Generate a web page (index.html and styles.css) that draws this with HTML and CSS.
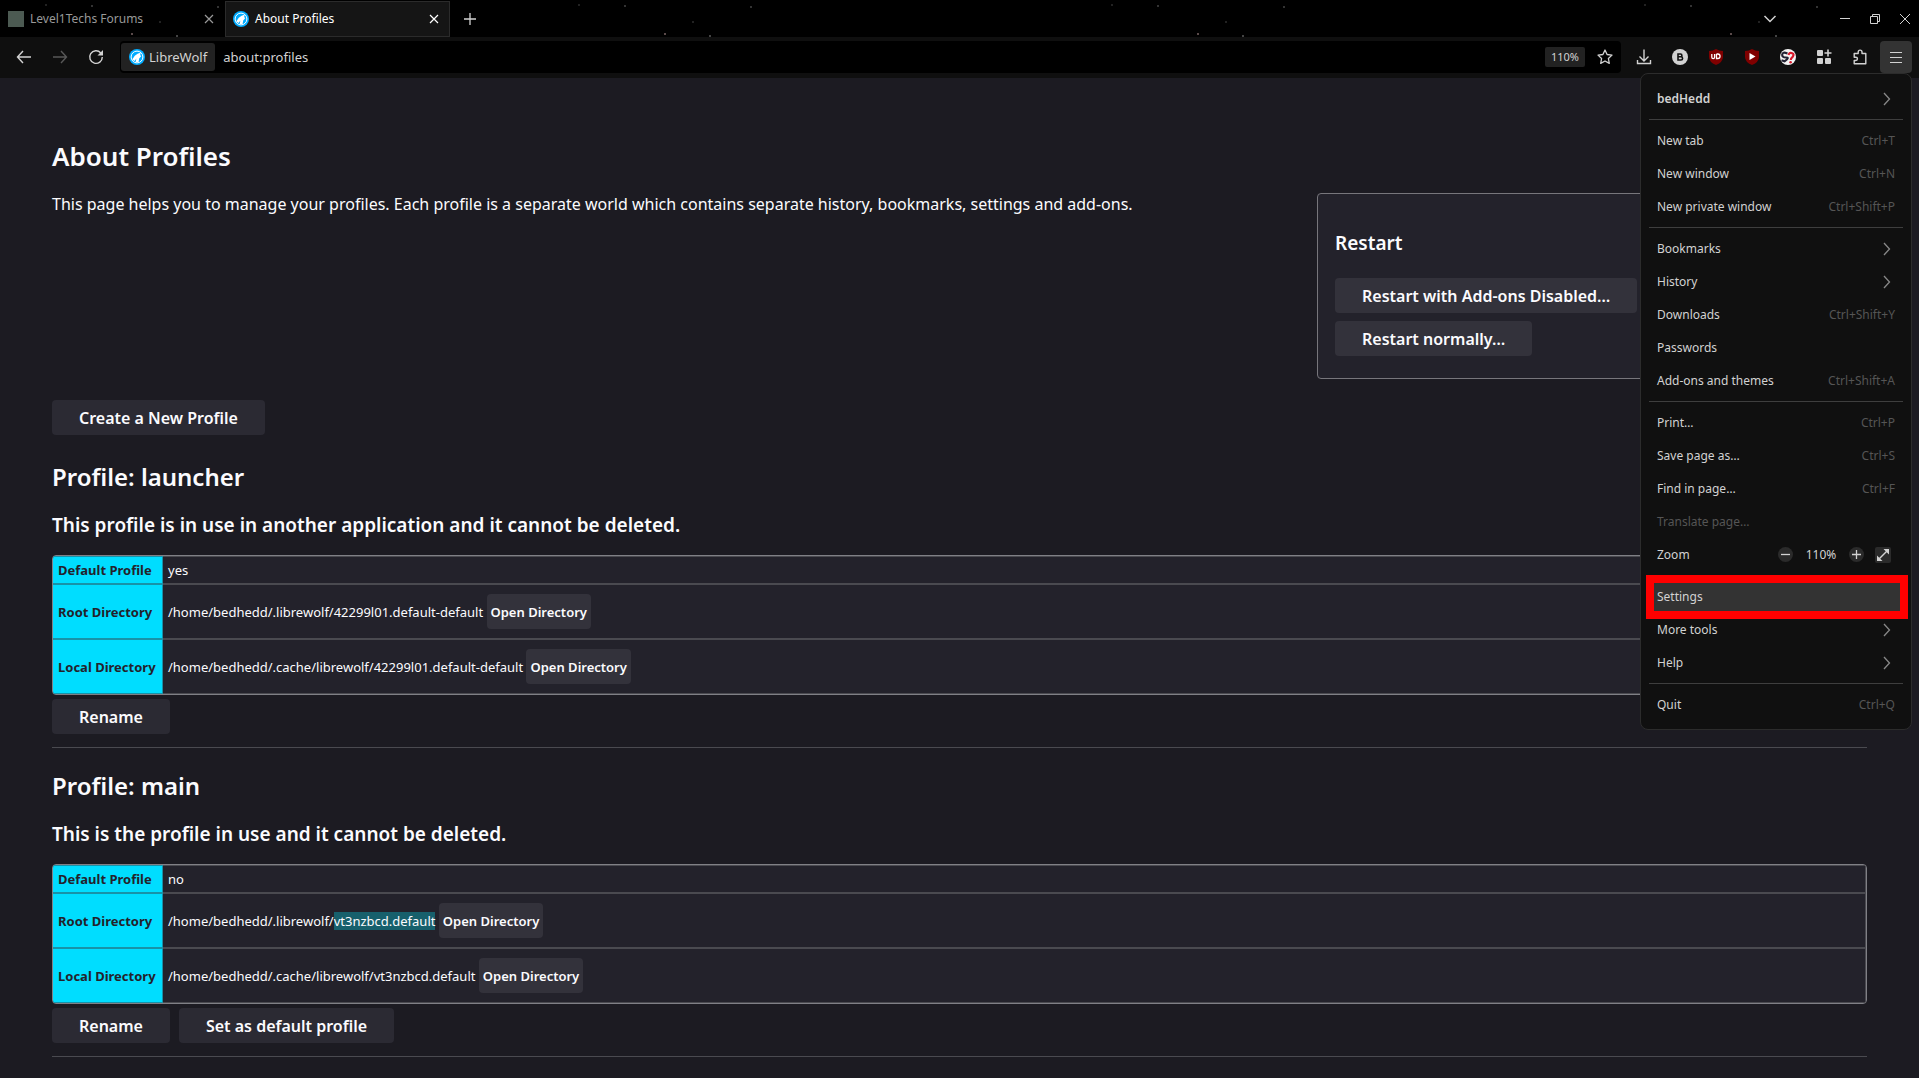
FILE: index.html
```html
<!DOCTYPE html>
<html lang="en">
<head>
    <meta charset="UTF-8">
    <title>About Profiles</title>
    <link rel="stylesheet" href="styles.css">
</head>
<body>
<svg class="defs" aria-hidden="true">
    <symbol id="wolf" viewBox="0 0 16 16">
        <circle cx="8" cy="8" r="8" fill="#00acff"/>
        <circle cx="8" cy="8" r="5.9" fill="none" stroke="#fff" stroke-width="1"/>
        <path d="M3.2 10.6 5.8 6.8 8.6 4.7 11.8 3.6 11.2 5.6 12 7.6 10.2 9.4 9.6 12.9 6.6 13.1 7.4 9.6 5.6 11.9z" fill="#fff"/>
    </symbol>
    <symbol id="close" viewBox="0 0 10 10">
        <path d="M1 1l8 8M9 1l-8 8" fill="none" stroke="currentColor" stroke-width="1.2"/>
    </symbol>
    <symbol id="arrow" viewBox="0 0 8 14">
        <path d="M1 1l5.5 6-5.5 6" fill="none" stroke="currentColor" stroke-width="1.3"/>
    </symbol>
</svg>

<header class="browser">
    <div class="tabs">
        <div class="tab">
            <span class="favicon"></span>
            <span class="tab-title">Level1Techs Forums</span>
            <button class="tab-close" aria-label="Close tab"><svg width="10" height="10"><use href="#close"/></svg></button>
        </div>
        <div class="tab selected">
            <svg class="icon" width="16" height="16"><use href="#wolf"/></svg>
            <span class="tab-title">About Profiles</span>
            <button class="tab-close" aria-label="Close tab"><svg width="10" height="10"><use href="#close"/></svg></button>
        </div>
        <button class="tab-new" aria-label="New tab"><svg width="12" height="12" viewBox="0 0 12 12"><path d="M6 0v12M0 6h12" stroke="currentColor" stroke-width="1.3"/></svg></button>
        <div class="window-buttons">
            <button class="all-tabs" aria-label="List all tabs"><svg width="14" height="8" viewBox="0 0 14 8"><path d="M1.5 1l5.5 5.5 5.5-5.5" fill="none" stroke="currentColor" stroke-width="1.5"/></svg></button>
            <button aria-label="Minimize"><svg width="10" height="10" viewBox="0 0 10 10"><path d="M0 4.5h10" stroke="currentColor"/></svg></button>
            <button aria-label="Restore"><svg width="10" height="10" viewBox="0 0 10 10"><path d="M.5 2.5h7v7h-7zM2.5 2.5v-2h7v7h-2" fill="none" stroke="currentColor"/></svg></button>
            <button aria-label="Close"><svg width="10" height="10" viewBox="0 0 10 10"><path d="M0 0l10 10M10 0L0 10" stroke="currentColor"/></svg></button>
        </div>
    </div>

    <div class="nav">
        <button class="nav-button" aria-label="Back"><svg width="16" height="16" viewBox="0 0 16 16"><path d="M7 2L1.5 8 7 14M1.5 8H15" fill="none" stroke="currentColor" stroke-width="1.4"/></svg></button>
        <button class="nav-button" disabled aria-label="Forward"><svg width="16" height="16" viewBox="0 0 16 16"><path d="M9 2l5.5 6L9 14M14.5 8H1" fill="none" stroke="currentColor" stroke-width="1.4"/></svg></button>
        <button class="nav-button" aria-label="Reload"><svg width="16" height="16" viewBox="0 0 16 16"><path d="M12.8 4A6.3 6.3 0 1 0 14.3 8" fill="none" stroke="currentColor" stroke-width="1.4"/><path d="M15 1v5.5H9.5z" fill="currentColor"/></svg></button>
        <div class="urlbar">
            <button class="identity"><svg width="16" height="16"><use href="#wolf"/></svg>LibreWolf</button>
            <input class="url" type="text" value="about:profiles" aria-label="Address">
            <button class="page-zoom">110%</button>
            <button class="bookmark" aria-label="Bookmark this page"><svg width="16" height="16" viewBox="0 0 16 16"><path d="M8 1l2.1 4.5 4.9.6-3.6 3.4.9 4.9L8 12l-4.3 2.4.9-4.9L1 6.1l4.9-.6z" fill="none" stroke="currentColor" stroke-width="1.3" stroke-linejoin="round"/></svg></button>
        </div>
        <div class="toolbar">
            <button aria-label="Downloads"><svg width="16" height="16" viewBox="0 0 16 16"><path d="M8 .5v11M3.5 7.5L8 12l4.500-4.500M1.500 11v3.500h13V11" fill="none" stroke="currentColor" stroke-width="1.4"/></svg></button>
            <button aria-label="Bitwarden"><svg width="16" height="16" viewBox="0 0 16 16"><circle cx="8" cy="8" r="8" fill="#d2d2d2"/><path d="M6 5h2.500a1.300 1.300 0 0 1 0 2.800H6zM6 7.800h3a1.600 1.600 0 0 1 0 3.200H6z" fill="none" stroke="#111" stroke-width="1.600"/></svg></button>
            <button aria-label="uBlock Origin"><svg width="16" height="16" viewBox="0 0 16 16"><path d="M8 0q3 2 7 2v6q0 5-7 8Q1 13 1 8V2q4 0 7-2z" fill="#800000"/><path d="M3.800 5v3.200a1.400 1.400 0 0 0 2.800 0V5M8.500 5v4.500h1.300a2.200 2.200 0 0 0 0-4.500H8.500" fill="none" stroke="#fff" stroke-width="1.300"/></svg></button>
            <button aria-label="Video blocker"><svg width="16" height="16" viewBox="0 0 16 16"><path d="M8 0q3 2 7 2v6q0 5-7 8Q1 13 1 8V2q4 0 7-2z" fill="#800000"/><path d="M5.500 4v7l6-3.500z" fill="#fff"/></svg></button>
            <button aria-label="Search helper"><svg width="16" height="16" viewBox="0 0 16 16"><circle cx="8" cy="8" r="8" fill="#f4f4f4"/><path d="M7.500 4.500Q2.500 2.500 2.200 5.500T6 8.500 4.500 12.300L1.500 11.300" fill="none" stroke="#223" stroke-width="2.200"/><path d="M8.500 6Q9.500 3 12.200 4.200t0 4.200Q10.800 9.300 10.800 11" fill="none" stroke="#d8182a" stroke-width="2.200"/><circle cx="10.600" cy="13.300" r="1.300" fill="#d8182a"/></svg></button>
            <button aria-label="Containers"><svg width="16" height="16" viewBox="0 0 16 16" fill="currentColor"><rect x="1" y="1" width="6" height="6" rx="1"/><rect x="1" y="9" width="6" height="6" rx="1"/><rect x="9" y="9" width="6" height="6" rx="1"/><path d="M11.200.5h1.600v2.700h2.700v1.600h-2.700v2.700h-1.600V4.800H8.500V3.200h2.700z"/></svg></button>
            <button aria-label="Extensions"><svg width="16" height="16" viewBox="0 0 16 16"><path d="M6.200 4.500V3a1.900 1.900 0 0 1 3.800 0v1.500h3.800V14.800H2.200v-3.300h1.600a1.600 1.600 0 0 0 0-3.300H2.200V4.500z" fill="none" stroke="currentColor" stroke-width="1.400" stroke-linejoin="round"/></svg></button>
            <button class="open" aria-label="Open application menu"><svg width="14" height="12" viewBox="0 0 14 12"><path d="M1 1.500h12M1 6.500h12M1 11.500h12" stroke="currentColor"/></svg></button>
        </div>
    </div>

    <nav class="menu">
        <button class="item account">bedHedd<svg width="8" height="14"><use href="#arrow"/></svg></button>
        <hr>
        <button class="item">New tab<kbd>Ctrl+T</kbd></button>
        <button class="item">New window<kbd>Ctrl+N</kbd></button>
        <button class="item">New private window<kbd>Ctrl+Shift+P</kbd></button>
        <hr>
        <button class="item">Bookmarks<svg width="8" height="14"><use href="#arrow"/></svg></button>
        <button class="item">History<svg width="8" height="14"><use href="#arrow"/></svg></button>
        <button class="item">Downloads<kbd>Ctrl+Shift+Y</kbd></button>
        <button class="item">Passwords</button>
        <button class="item">Add-ons and themes<kbd>Ctrl+Shift+A</kbd></button>
        <hr>
        <button class="item">Print…<kbd>Ctrl+P</kbd></button>
        <button class="item">Save page as…<kbd>Ctrl+S</kbd></button>
        <button class="item">Find in page…<kbd>Ctrl+F</kbd></button>
        <button class="item" disabled>Translate page…</button>
        <div class="item zoom">
            <span class="zoom-label">Zoom</span>
            <button class="round" aria-label="Zoom out"><svg width="9" height="9" viewBox="0 0 9 9"><path d="M0 4.500h9" stroke="currentColor" stroke-width="1.300"/></svg></button>
            <span class="zoom-value">110%</span>
            <button class="round" aria-label="Zoom in"><svg width="9" height="9" viewBox="0 0 9 9"><path d="M0 4.500h9M4.500 0v9" stroke="currentColor" stroke-width="1.300"/></svg></button>
            <button class="full" aria-label="Full screen"><svg width="12" height="12" viewBox="0 0 12 12"><path d="M2 10l8-8" stroke="currentColor" stroke-width="1.400"/><path d="M6.500 0H12v5.500zM0 6.500V12h5.500z" fill="currentColor"/></svg></button>
        </div>
        <hr>
        <button class="item marked">Settings</button>
        <button class="item">More tools<svg width="8" height="14"><use href="#arrow"/></svg></button>
        <button class="item">Help<svg width="8" height="14"><use href="#arrow"/></svg></button>
        <hr>
        <button class="item">Quit<kbd>Ctrl+Q</kbd></button>
    </nav>
</header>

<main class="page">
    <h1>About Profiles</h1>
    <div class="intro">
        <p>This page helps you to manage your profiles. Each profile is a separate world which contains separate history, bookmarks, settings and add-ons.</p>
        <div class="restart">
            <h3>Restart</h3>
            <button class="btn">Restart with Add-ons Disabled…</button>
            <button class="btn">Restart normally…</button>
        </div>
    </div>
    <button class="btn create">Create a New Profile</button>

    <section class="profile">
        <h2>Profile: launcher</h2>
        <h3>This profile is in use in another application and it cannot be deleted.</h3>
        <table>
            <tr>
                <th>Default Profile</th>
                <td>yes</td>
            </tr>
            <tr class="dir">
                <th>Root Directory</th>
                <td>/home/bedhedd/.librewolf/42299l01.default-default <button class="btn small">Open Directory</button></td>
            </tr>
            <tr class="dir">
                <th>Local Directory</th>
                <td>/home/bedhedd/.cache/librewolf/42299l01.default-default <button class="btn small">Open Directory</button></td>
            </tr>
        </table>
        <div class="actions">
            <button class="btn">Rename</button>
        </div>
    </section>

    <section class="profile">
        <h2>Profile: main</h2>
        <h3>This is the profile in use and it cannot be deleted.</h3>
        <table>
            <tr>
                <th>Default Profile</th>
                <td>no</td>
            </tr>
            <tr class="dir">
                <th>Root Directory</th>
                <td>/home/bedhedd/.librewolf/<mark>vt3nzbcd.default</mark> <button class="btn small">Open Directory</button></td>
            </tr>
            <tr class="dir">
                <th>Local Directory</th>
                <td>/home/bedhedd/.cache/librewolf/vt3nzbcd.default <button class="btn small">Open Directory</button></td>
            </tr>
        </table>
        <div class="actions">
            <button class="btn">Rename</button>
            <button class="btn">Set as default profile</button>
        </div>
    </section>
</main>
</body>
</html>
```

FILE: styles.css
```css
*{
    box-sizing: border-box;
    margin: 0;
    padding: 0;
}
body{
    background: #1c1b22;
    color: #fbfbfe;
    font: 16px/24px "Noto Sans", sans-serif;
}
button{
    border: 0;
    background: none;
    color: inherit;
    font: inherit;
}
svg{
    display: block;
    flex: none;
}
.defs{
    position: absolute;
    width: 0;
    height: 0;
}

/* browser chrome */
.browser{
    position: relative;
    z-index: 1;
    background: #000;
    color: #d2d2d2;
    font-size: 12px;
    line-height: 16px;
}
/* faint stars of the theme */
.tabs{
    display: flex;
    height: 37px;
    padding-top: 1px;
    background:
        radial-gradient(circle at 132px 34px, #5a4a4a 1px, transparent 1px),
        radial-gradient(circle at 218px 7px, #333 1px, transparent 1px),
        radial-gradient(circle at 92px 6px, #333 1px, transparent 1px),
        radial-gradient(circle at 177px 36px, #444 1px, transparent 1px),
        radial-gradient(circle at 160px 22px, #222 1px, transparent 1px),
        radial-gradient(circle at 46px 5px, #222 1px, transparent 1px);
    background-size: 533px 37px;
    background-color: #000;
}
.tab{
    display: flex;
    align-items: center;
    width: 225px;
    height: 36px;
    padding: 0 11px 0 8px;
    color: #999;
}
.tab.selected{
    border: 1px solid #2b2b2b;
    padding: 0 10px 0 7px;
    background: #151515;
    color: #fff;
}
.favicon{
    width: 16px;
    height: 16px;
    background: #4c5a52;
}
.tab-title{
    flex: 1;
    margin-left: 6px;
}
.tab-new{
    width: 38px;
    padding-left: 14px;
    color: #d2d2d2;
}
.window-buttons{
    display: flex;
    margin-left: auto;
}
.window-buttons button{
    width: 30px;
    padding-left: 11px;
}
.window-buttons .all-tabs{
    width: 66px;
    padding-left: 0;
}
.nav{
    display: flex;
    align-items: flex-start;
    height: 41px;
    padding: 4px 7px 0 6px;
    background: #0f0f0f;
}
.nav-button{
    display: grid;
    place-items: center;
    width: 36px;
    height: 32px;
}
.nav-button:disabled{
    color: #585858;
}
.urlbar{
    display: flex;
    align-items: center;
    flex: 1;
    height: 32px;
    margin-left: 6px;
    padding: 0 8px 0 1px;
    border-radius: 4px;
    background: #000;
    font-size: 13px;
}
.identity{
    display: flex;
    align-items: center;
    gap: 4px;
    height: 28px;
    padding: 0 8px;
    border-radius: 3px;
    background: #222;
}
.url{
    flex: 1;
    margin-left: 8px;
    border: 0;
    background: none;
    color: #d2d2d2;
    font: inherit;
}
.page-zoom{
    width: 40px;
    height: 20px;
    margin-right: 12px;
    border-radius: 2px;
    background: #222;
    font-size: 11px;
}
.toolbar{
    display: flex;
    align-items: center;
    gap: 4px;
    margin-left: 7px;
}
.toolbar button{
    display: grid;
    place-items: center;
    width: 32px;
    height: 32px;
    border-radius: 4px;
}
.toolbar .open{
    background: #333;
}

/* application menu */
.menu{
    position: absolute;
    top: 73px;
    right: 7px;
    width: 272px;
    padding: 8px 0;
    border: 1px solid #2c2c2c;
    border-radius: 8px;
    background: #101010;
}
.menu hr{
    height: 1px;
    margin: 4px 8px;
    border: 0;
    background: #3e3e3e;
}
.item{
    display: flex;
    align-items: center;
    justify-content: space-between;
    width: 100%;
    height: 33px;
    padding: 0 16px;
}
.item:disabled{
    color: #555;
}
.item > svg{
    margin-right: 4px;
    color: #888;
}
.item kbd{
    color: #555;
    font: inherit;
}
.account{
    font-weight: 600;
}
.zoom-label{
    flex: 1;
}
.zoom-value{
    width: 56px;
    text-align: center;
}
.round, .full{
    display: grid;
    place-items: center;
    width: 15px;
    height: 15px;
    border-radius: 50%;
    background: #2b2b2b;
}
.full{
    width: 16px;
    height: 16px;
    margin: 0 4px 0 11px;
    border-radius: 2px;
}
.marked{
    position: relative;
    width: auto;
    min-width: calc(100% - 16px);
    margin: 0 8px;
    padding: 0 8px;
    background: #333;
}
.marked::after{
    content: "";
    position: absolute;
    inset: -5px -5px -6px -3px;
    border: 8px solid #f00;
}

/* about:profiles */
.page{
    padding: 60px 52px 22px;
}
h1, h2, h3{
    font-weight: 600;
}
h1{
    font-size: 26px;
    line-height: 36px;
}
h2{
    padding-top: 22px;
    font-size: 24px;
    line-height: 32px;
}
h3{
    font-size: 19px;
    line-height: 24px;
}
.intro{
    display: flex;
    justify-content: space-between;
    align-items: flex-start;
    margin: 19px 0 21px;
}
.intro p{
    margin-top: -1px;
}
.restart{
    display: flex;
    flex-direction: column;
    align-items: flex-start;
    gap: 8px;
    width: 550px;
    padding: 37px 17px 22px;
    border: 1px solid #77767c;
    border-radius: 4px;
    background: #23222b;
}
.restart h3{
    margin-bottom: 15px;
}
.btn{
    height: 35px;
    padding: 0 27px;
    border-radius: 4px;
    background: #2b2a33;
    font-weight: 600;
}
.restart .btn, .small{
    background: #33323b;
}
.small{
    padding: 0 4px;
}
.create{
    display: block;
    margin-bottom: 4px;
}
.profile{
    padding-bottom: 13px;
    border-bottom: 1px solid #4a4a50;
}
.profile h3{
    margin: 20px 0 18px;
}
table{
    width: 100%;
    border: 1px solid #808086;
    border-radius: 4px;
    border-spacing: 0;
    overflow: hidden;
    background: #23222b;
    font-size: 13px;
    line-height: 18px;
}
th, td{
    height: 28px;
    border: 1px solid #4a4a50;
    border-left: 0;
    padding: 0 5px;
}
th{
    width: 110px;
    border-color: #1892a8;
    background: #00ddff;
    color: #23222b;
    text-align: left;
    white-space: nowrap;
}
.dir th, .dir td{
    height: 55px;
}
mark{
    background: #17606c;
    color: inherit;
}
.actions{
    display: flex;
    gap: 9px;
    margin-top: 4px;
}
```
